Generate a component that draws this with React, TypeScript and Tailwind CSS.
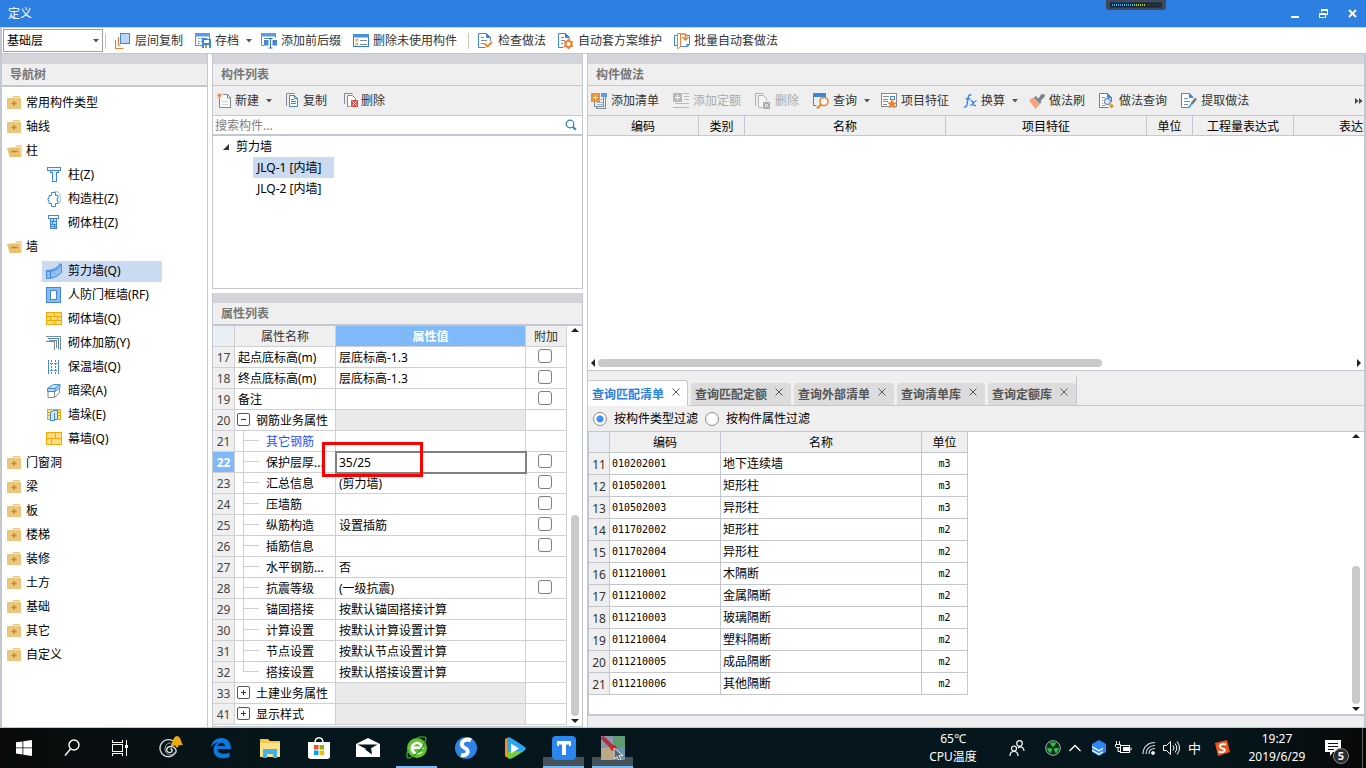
import { useState, type ReactNode } from 'react';
import { clsx } from 'clsx';

/* ---------- icons ---------- */

function Icon({ children, size = 16, crisp = true }: { children: ReactNode; size?: number; crisp?: boolean }) {
  return (
    <svg
      width={size}
      height={size}
      viewBox="0 0 16 16"
      fill="none"
      className="shrink-0"
      shapeRendering={crisp ? 'crispEdges' : 'auto'}
      aria-hidden="true"
    >
      {children}
    </svg>
  );
}

const BLUE = '#3f87d9';
const ORANGE = '#f08030';
const GREY = '#7e8a96';

const icons = {
  layerCopy: (
    <Icon crisp={false}>
      <path d="M.5 7v8.500h8M3.500 4v8.500h2" stroke={ORANGE} strokeWidth="1.200" />
      <rect x="5.500" y=".5" width="9" height="10" fill="#b7d7fb" stroke={BLUE} />
    </Icon>
  ),
  archive: (
    <Icon crisp={false}>
      <rect x=".5" y=".5" width="14" height="12" fill="#fff" stroke={GREY} />
      <rect x="0" y="0" width="15" height="3.500" fill="#5a9ae6" />
      <path d="M3 5.500h1.500M6 5.500h6M3 8.500h1.500M6 8.500h1M3 10.500h1.500" stroke={BLUE} />
      <rect x="7" y="6" width="9" height="9" fill={BLUE} />
      <rect x="9" y="7" width="5" height="3" fill="#fff" />
      <rect x="9" y="12" width="5" height="3" fill="#fff" />
      <rect x="10" y="12" width="2" height="3" fill={ORANGE} />
    </Icon>
  ),
  affix: (
    <Icon crisp={false}>
      <path d="M.5 3v9.500H3M14.500 3v2" stroke={GREY} />
      <rect x="0" y="0" width="15" height="3.500" fill="#5a9ae6" />
      <path d="M3 5.500h6" stroke={GREY} />
      <rect x="3" y="7" width="4.500" height="5.500" fill={BLUE} />
      <rect x="11.500" y="7" width="4.500" height="5.500" fill={BLUE} />
      <path d="M7.500 5.500h4M7.500 15h4M9.500 6v9" stroke="#2f6fc0" />
    </Icon>
  ),
  deleteUnused: (
    <Icon crisp={false}>
      <rect x=".5" y="1.500" width="15" height="12" fill="#fff" stroke="#2f7fd0" />
      <rect x="0" y="1" width="16" height="3.500" fill="#4a90e2" />
      <path d="M2.500 6l2.500 2.500M5 6L2.500 8.500M2.500 10L5 12.500M5 10l-2.500 2.500" stroke={ORANGE} />
      <path d="M7 7.500h7M7 11.500h7" stroke={GREY} />
    </Icon>
  ),
  check: (
    <Icon crisp={false}>
      <path d="M12.500 8V4.500L8.500.5h-8v14h7" stroke={BLUE} fill="#fff" />
      <path d="M8.500.5v4h4z" fill={BLUE} stroke={BLUE} />
      <path d="M3 4.500h3M3 7.500h6M3 10.500h3" stroke={GREY} />
      <path d="M6.500 10.500l3 3L14 9" stroke={ORANGE} strokeWidth="1.800" />
    </Icon>
  ),
  scheme: (
    <Icon crisp={false}>
      <path d="M11.500 6V4.500L7.500.5h-7v14h5" stroke={BLUE} fill="#fff" />
      <path d="M7.500.5v4h4z" fill={BLUE} stroke={BLUE} />
      <path d="M3 4.500h3M3 7.500h4M3 10.500h2" stroke={GREY} />
      <circle cx="10.500" cy="11" r="3" stroke={ORANGE} strokeWidth="2" />
      <path d="M10.500 6v2M10.500 14v2M6.200 8.500l1.700 1M13.100 12.500l1.700 1M14.800 8.500l-1.700 1M7.900 12.500l-1.700 1" stroke={ORANGE} strokeWidth="2" />
    </Icon>
  ),
  batch: (
    <Icon crisp={false}>
      <path d="M3 2.500H.5v10H3M12 2.500h3.500v9l-2 2H6" stroke={BLUE} />
      <path d="M15.500 11l-3 3v-3z" fill={BLUE} />
      <path d="M3.500 15.500V.5h3v13l-2 2z" stroke={ORANGE} />
      <path d="M6.500 1h5v5.500m-3-2.500l3 3 3-3" stroke={ORANGE} strokeWidth="1.500" />
    </Icon>
  ),
  create: (
    <Icon crisp={false}>
      <path d="M2.500 5v9.500h11v-10l-3-3H6" stroke={GREY} fill="#fafafa" />
      <path d="M10.500 1.500v3.500h3" stroke={GREY} />
      <path d="M5 8.500h6M5 11.500h6" stroke="#cfd4da" />
      <path d="M.5.500l4 4M4.500.5l-4 4M2.500 0v5M0 2.500h5" stroke={ORANGE} strokeWidth=".8" />
    </Icon>
  ),
  copy: (
    <Icon crisp={false}>
      <path d="M1.500 13V.5h8" stroke={GREY} />
      <path d="M4.500 2.500h5l3 3v8h-8z" stroke={BLUE} fill="#fff" />
      <path d="M9.500 2.500v3h3M6 6.500h3M6 8.500h5M6 10.500h5" stroke={BLUE} />
    </Icon>
  ),
  remove: (
    <Icon crisp={false}>
      <path d="M1.500 11V.5h8" stroke={GREY} />
      <path d="M7 13.500H4.500v-11h5l3 3v2" stroke={GREY} fill="#fff" />
      <rect x="8" y="7" width="7" height="7" fill="#d9534f" />
      <path d="M9.500 8.500l4 4M13.500 8.500l-4 4" stroke="#fff" />
    </Icon>
  ),
  removeOff: (
    <Icon crisp={false}>
      <path d="M.5 13V.5h8" stroke="#b0b0b0" />
      <path d="M7 14.500H3.500v-12h5l3 3v2" stroke="#b0b0b0" fill="#f6f6f6" />
      <rect x="8" y="9" width="7" height="7" fill="#a8a8a8" />
      <path d="M9.500 10.500l4 4M13.500 10.500l-4 4" stroke="#fff" />
    </Icon>
  ),
  addList: (
    <Icon>
      <path d="M3.500 9v4.500h9V2M5.500 13v2.500h9V3.500" stroke={GREY} />
      <rect x="10" y="0" width="6" height="4" fill="#5a9ae6" />
      <path d="M9 6.500h3M6 9.500h6M6 11.500h6" stroke="#9fb4c8" />
      <rect x="0" y="0" width="9" height="9" fill="#ee9040" />
      <path d="M4.500 2v5M2 4.500h5" stroke="#fff" />
    </Icon>
  ),
  addQuota: (
    <Icon>
      <rect x="0" y="0" width="9" height="9" fill="#b8b8b8" />
      <path d="M4.500 2v5M2 4.500h5" stroke="#fff" />
      <path d="M10 .5h6M11 3.500h5M11 6.500h5M2 10.500h14M0 14.500h16" stroke="#b8b8b8" />
    </Icon>
  ),
  query: (
    <Icon crisp={false}>
      <path d="M.5 3v9.500h3M12.500 3v2" stroke={BLUE} />
      <rect x="0" y="0" width="13" height="4" fill={BLUE} />
      <circle cx="11" cy="8.500" r="4" stroke={ORANGE} strokeWidth="1.600" fill="#fff" />
      <path d="M8 11.500l-4 4" stroke={ORANGE} strokeWidth="2" />
    </Icon>
  ),
  feature: (
    <Icon crisp={false}>
      <rect x=".5" y=".5" width="15" height="13" stroke={GREY} fill="#fff" />
      <path d="M2 3.500h6M2 6.500h5M2 8.500h5M2 11.500h4" stroke={GREY} />
      <rect x="9.500" y="3.500" width="4" height="3" stroke={BLUE} />
      <path d="M11 6l1.500 3.300 3.500.3-2.700 2.400.9 3.600L11 13.800l-3.200 1.800.9-3.600L6 9.600l3.500-.3z" fill={ORANGE} />
    </Icon>
  ),
  fx: (
    <Icon crisp={false} size={14}>
      <path d="M9.500 1.500C8 .3 6.500 1 6 4L4.500 12c-.4 2.500-1.500 3.500-3.500 2.500M3 5.500h5.500" stroke={BLUE} strokeWidth="1.700" />
      <path d="M8.500 8c2-1 2.500 0 3 2.500s1 3.500 3.500 2.500M15.500 7.500c-2-.5-5.500 6-7.500 5.500" stroke={BLUE} strokeWidth="1.500" />
    </Icon>
  ),
  brush: (
    <Icon crisp={false}>
      <path d="M0 7.500l4-3 7 6.500-4.500 5z" fill="#f9a27c" />
      <path d="M4.500 4.500L7 3l5.500 6-1.500 2z" fill={GREY} />
      <path d="M9 6.500l3-5L15.500 1l.3 2.500-4.300 4.500z" fill="#75828e" />
    </Icon>
  ),
  methodQuery: (
    <Icon crisp={false}>
      <path d="M12.500 9V4.500L8.500.5h-8v14h9" stroke={BLUE} fill="#fff" />
      <path d="M8.500.5v4h4z" fill={BLUE} stroke={BLUE} />
      <path d="M3 4.500h3M3 7.500h1M3 10.500h1M3 12.500h3" stroke={GREY} />
      <circle cx="8.500" cy="8.500" r="3" stroke="#7b93c4" fill="#dce9fb" strokeWidth="1.300" />
      <path d="M12.500 10.500L15 13l-2.500 2.500L10 13z" fill="#f0941e" />
    </Icon>
  ),
  extract: (
    <Icon crisp={false}>
      <path d="M11.500 5V4.500L8.500.5h-8v14h7" stroke={BLUE} fill="#fff" />
      <path d="M8.500.5v4h3.500z" fill={BLUE} stroke={BLUE} />
      <path d="M3 5.500h4M3 8.500h6M3 11.500h4" stroke={GREY} />
      <path d="M15 5.500L10.500 11" stroke="#6c7780" strokeWidth="2.500" />
      <path d="M10.500 11l-3 4" stroke="#35b5d8" strokeWidth="2" />
    </Icon>
  ),
  folder: (
    <Icon crisp={false}>
      <path d="M6.500 1H13v2h1v11H0V3h5z" fill="#ecc67c" />
      <path d="M6 2.500h7.500" stroke="#f9ebcd" />
      <path d="M7 6v5M4.500 8.500h5" stroke="#c48a28" strokeWidth="1.500" />
    </Icon>
  ),
  folderOpen: (
    <Icon crisp={false}>
      <path d="M2.500 4h6V2H15v11H3z" fill="#f3d9a2" />
      <path d="M0 5h13l1 9H2.500z" fill="#ebc170" />
      <path d="M4.500 8.500h6" stroke="#b98227" strokeWidth="1.500" />
    </Icon>
  ),
  column: (
    <Icon>
      <path d="M1.500.5h13v3h-13zM4.500 3.500v2h2v9h4v-9h2v-2" stroke={BLUE} fill="#e8f2fd" />
    </Icon>
  ),
  tieColumn: (
    <Icon crisp={false}>
      <path d="M8 .5h3.500l2 2v2h1v6h-1v2.500" stroke="#a9cbf2" />
      <path d="M5.500 1.500h4v3h2.500v3h-1v2h1v3H9.500v3h-4v-3H3v-3H2v-2h1v-3h2.500z" stroke={BLUE} fill="#fff" />
    </Icon>
  ),
  brickColumn: (
    <Icon>
      <rect x="2.500" y=".5" width="10" height="3" stroke={BLUE} fill="#fff" />
      <rect x="4.500" y="3.500" width="6" height="10" stroke={BLUE} fill="#b7d7fb" />
      <path d="M4 6.500h7M4 9.500h7M4 11.500h7M7.500 4v3M6.500 7v3M8.500 10v3" stroke={BLUE} />
    </Icon>
  ),
  shearWall: (
    <Icon crisp={false}>
      <path d="M.5 7.500C7 7.500 11 5 14 .8l1.700.5v8C12 13 8 15.500.5 15.500z" fill="#8dbff5" stroke={BLUE} />
      <path d="M.5 7.500l2.500 1C8 8.500 12 6 15.700 1.300M4.500 8.500v6.500" stroke={BLUE} />
    </Icon>
  ),
  frameWall: (
    <Icon>
      <rect x=".5" y=".5" width="14" height="15" fill="#8db9ee" stroke={BLUE} />
      <rect x="4.500" y="3.500" width="6" height="9" fill="#fff" stroke={BLUE} />
    </Icon>
  ),
  brickWall: (
    <Icon>
      <rect x=".5" y="1.500" width="15" height="12" fill="#ffdc8a" stroke="#f7a800" />
      <path d="M0 5.500h16M0 9.500h16M8.500 2v4M4.500 6v4M11.500 6v4M8.500 10v4" stroke="#f7a800" />
    </Icon>
  ),
  wallRebar: (
    <Icon>
      <path d="M0 1.500h14.500V15" stroke={GREY} />
      <path d="M2 3.500h10.500V14" stroke={BLUE} />
      <path d="M0 6.500h8.500V15M3 5.500h7.500V13" stroke={GREY} />
    </Icon>
  ),
  insulation: (
    <Icon>
      <path d="M2.500 1v14M12.500 1v14" stroke={BLUE} />
      <path d="M5.500 1v14M9.500 1v14" stroke={BLUE} strokeDasharray="2 1" />
      <path d="M2 4.500h11M2 11.500h11" stroke={BLUE} strokeDasharray="1 1" />
    </Icon>
  ),
  hiddenBeam: (
    <Icon crisp={false}>
      <path d="M1.500 5.500l6-4h6.500l-5 4z" fill="#cfe3fb" stroke={BLUE} />
      <path d="M1.500 8.500V5.500H9V8.500zM9 5.500L14 1.500v3L9 8.500" stroke={BLUE} fill="#b7d7fb" />
      <path d="M2 8.500v6h6.500l5-4.500V5M8.500 8.500v6" stroke={GREY} />
    </Icon>
  ),
  buttress: (
    <Icon>
      <rect x="1.500" y="2.500" width="13" height="10" fill="#ffdc8a" stroke="#f7a800" />
      <path d="M1 5.500h14M1 8.500h14" stroke="#f7a800" />
      <path d="M4.500 5.500l3-2h4v8l-3 2h-4z" fill="#d4e8fd" stroke={BLUE} />
      <path d="M8.500 5.500v8" stroke={BLUE} />
    </Icon>
  ),
  curtain: (
    <Icon>
      <rect x=".5" y="1.500" width="15" height="12" fill="#ffdc8a" stroke="#f7a800" />
      <path d="M0 7.500h16M9.500 2v5M5.500 8v6" stroke="#f7a800" />
    </Icon>
  ),
};

function Caret() {
  return (
    <svg width="6" height="4" viewBox="0 0 6 4" className="-mr-[3px] ml-[7px] shrink-0" aria-hidden="true">
      <path d="M0 0h6L3 3.500z" fill="#555" />
    </svg>
  );
}

type ToolButtonProps = {
  icon: ReactNode;
  label: string;
  menu?: boolean;
  disabled?: boolean;
  className?: string;
};

function ToolButton({ icon, label, menu, disabled, className = 'gap-1 px-[7px]' }: ToolButtonProps) {
  return (
    <button
      type="button"
      disabled={disabled}
      className={clsx('flex h-6 shrink-0 items-center whitespace-nowrap', className, disabled ? 'text-[#aaaaaa]' : 'text-[#333333]')}
    >
      {icon}
      <span className="flex items-center">
        {label}
        {menu && <Caret />}
      </span>
    </button>
  );
}

function PanelTitle({ children, thick }: { children: ReactNode; thick?: boolean }) {
  return (
    <div className="shrink-0">
      <div className="h-[10px] bg-[#d3d5db]" />
      <h2
        className={clsx(
          'flex items-center border-[#c3c7cf] bg-[#efefef] pl-2 font-bold text-[#777777]',
          thick ? 'h-[23px] border-b-2' : 'h-[22px] border-b',
        )}
      >
        {children}
      </h2>
    </div>
  );
}

/* ---------- navigation tree ---------- */

type NavItem = { label: string; icon: ReactNode; child?: boolean; active?: boolean };

const navItems: NavItem[] = [
  { label: '常用构件类型', icon: icons.folder },
  { label: '轴线', icon: icons.folder },
  { label: '柱', icon: icons.folderOpen },
  { label: '柱(Z)', icon: icons.column, child: true },
  { label: '构造柱(Z)', icon: icons.tieColumn, child: true },
  { label: '砌体柱(Z)', icon: icons.brickColumn, child: true },
  { label: '墙', icon: icons.folderOpen },
  { label: '剪力墙(Q)', icon: icons.shearWall, child: true, active: true },
  { label: '人防门框墙(RF)', icon: icons.frameWall, child: true },
  { label: '砌体墙(Q)', icon: icons.brickWall, child: true },
  { label: '砌体加筋(Y)', icon: icons.wallRebar, child: true },
  { label: '保温墙(Q)', icon: icons.insulation, child: true },
  { label: '暗梁(A)', icon: icons.hiddenBeam, child: true },
  { label: '墙垛(E)', icon: icons.buttress, child: true },
  { label: '幕墙(Q)', icon: icons.curtain, child: true },
  { label: '门窗洞', icon: icons.folder },
  { label: '梁', icon: icons.folder },
  { label: '板', icon: icons.folder },
  { label: '楼梯', icon: icons.folder },
  { label: '装修', icon: icons.folder },
  { label: '土方', icon: icons.folder },
  { label: '基础', icon: icons.folder },
  { label: '其它', icon: icons.folder },
  { label: '自定义', icon: icons.folder },
];

function NavTree() {
  return (
    <nav className="flex w-[208px] shrink-0 flex-col border-r border-l-2 border-[#c3c7cf]">
      <PanelTitle thick>导航树</PanelTitle>
      <ul className="pt-1">
        {navItems.map((item) => (
          <li key={item.label} className="flex h-6 items-center">
            <button
              type="button"
              className={clsx(
                'flex h-[21px] items-center whitespace-nowrap',
                item.child ? 'ml-10 w-[120px] gap-[6px] pl-1' : 'gap-[3px] pl-[5px]',
                item.active && 'bg-[#c9daf1]',
              )}
            >
              {item.icon}
              {item.label}
            </button>
          </li>
        ))}
      </ul>
    </nav>
  );
}

/* ---------- scroll bars ---------- */

function Triangle({ dir }: { dir: 'up' | 'down' | 'left' | 'right' }) {
  const shapes = { up: 'M1 6h8L5 2z', down: 'M1 3h8L5 7z', left: 'M7 1v8L3 5z', right: 'M3 1v8l4-4z' };
  return (
    <svg width="10" height="10" viewBox="0 0 10 10" className="shrink-0" aria-hidden="true">
      <path d={shapes[dir]} fill="#222" />
    </svg>
  );
}

/* ---------- property table ---------- */

type Prop = {
  no: number;
  name: string;
  value?: string;
  kind?: 'group' | 'child' | 'last';
  open?: boolean;
  check?: boolean;
  link?: boolean;
  current?: boolean;
};

const props: Prop[] = [
  { no: 17, name: '起点底标高(m)', value: '层底标高-1.3', check: true },
  { no: 18, name: '终点底标高(m)', value: '层底标高-1.3', check: true },
  { no: 19, name: '备注', check: true },
  { no: 20, name: '钢筋业务属性', kind: 'group', open: true },
  { no: 21, name: '其它钢筋', kind: 'child', link: true },
  { no: 22, name: '保护层厚...', value: '35/25', kind: 'child', check: true, current: true },
  { no: 23, name: '汇总信息', value: '(剪力墙)', kind: 'child', check: true },
  { no: 24, name: '压墙筋', kind: 'child', check: true },
  { no: 25, name: '纵筋构造', value: '设置插筋', kind: 'child', check: true },
  { no: 26, name: '插筋信息', kind: 'child', check: true },
  { no: 27, name: '水平钢筋...', value: '否', kind: 'child' },
  { no: 28, name: '抗震等级', value: '(一级抗震)', kind: 'child', check: true },
  { no: 29, name: '锚固搭接', value: '按默认锚固搭接计算', kind: 'child' },
  { no: 30, name: '计算设置', value: '按默认计算设置计算', kind: 'child' },
  { no: 31, name: '节点设置', value: '按默认节点设置计算', kind: 'child' },
  { no: 32, name: '搭接设置', value: '按默认搭接设置计算', kind: 'last' },
  { no: 33, name: '土建业务属性', kind: 'group' },
  { no: 41, name: '显示样式', kind: 'group' },
];

function PropName({ row }: { row: Prop }) {
  if (row.kind === 'group') {
    return (
      <div className="flex h-5 items-center gap-[6px] pl-[2px]">
        <button
          type="button"
          aria-label={row.name}
          className="mb-px flex size-[13px] items-center justify-center rounded-[2px] border border-[#555555]"
        >
          <svg width="5" height="5" viewBox="0 0 5 5" shapeRendering="crispEdges" aria-hidden="true">
            <path d={row.open ? 'M0 2.500h5' : 'M0 2.500h5M2.500 0v5'} stroke="#333" />
          </svg>
        </button>
        <span className="pt-[2px]">{row.name}</span>
      </div>
    );
  }
  if (row.kind) {
    return (
      <div className="flex h-5 items-center gap-[7px] pl-2 whitespace-nowrap">
        <span className="flex h-5 w-4 shrink-0 flex-col">
          <span className="h-[10px] border-b border-l border-[#d0d0d0]" />
          <span className={clsx('grow border-[#d0d0d0]', row.kind === 'child' && 'border-l')} />
        </span>
        <span className={clsx('pt-[2px]', row.link && 'text-[#1a56ff]')}>{row.name}</span>
      </div>
    );
  }
  return <div className="pt-[2px] pl-[3px] whitespace-nowrap">{row.name}</div>;
}

const propCell = 'h-[21px] border-r border-b border-[#d0d0d0] p-0';
const propText = 'h-[21px] border-r border-b border-[#d0d0d0] px-0 pt-[2px] pb-0';

function PropertyTable() {
  return (
    <div className="flex min-h-0 grow">
      <table className="table-fixed border-separate border-spacing-0 self-start">
        <colgroup>
          <col className="w-[22px]" />
          <col className="w-[101px]" />
          <col className="w-[190px]" />
          <col className="w-[41px]" />
        </colgroup>
        <thead>
          <tr className="text-[#333333]">
            <th aria-label="序号" className={clsx(propCell, 'bg-[#eaeff6]')} />
            <th className={clsx(propText, 'bg-[#efefef] font-normal')}>属性名称</th>
            <th className={clsx(propText, 'bg-[#80b9fa] font-bold text-white')}>属性值</th>
            <th className={clsx(propText, 'bg-[#efefef] font-normal')}>附加</th>
          </tr>
        </thead>
        <tbody>
          {props.map((row) => (
            <tr key={row.no}>
              <td className={clsx(propText, 'text-center', row.current ? 'bg-[#80b9fa] font-bold text-white' : 'bg-[#efefef] text-[#444444]')}>
                {row.no}
              </td>
              <td className={propCell}>
                <PropName row={row} />
              </td>
              <td
                className={clsx(
                  propText,
                  'pl-[3px]',
                  row.kind === 'group' && 'bg-[#eaeaea]',
                  row.current && 'relative outline-2 -outline-offset-1 outline-[#808080]',
                )}
              >
                {row.value}
                {row.current && <span className="absolute -top-[10px] -left-[14px] h-[35px] w-[101px] border-3 border-[#ff0000]" />}
              </td>
              <td className={propCell}>
                {row.check && (
                  <input
                    type="checkbox"
                    aria-label={`${row.name} 附加`}
                    className="mr-auto mb-[2px] ml-3 block size-[14px] appearance-none rounded-[3px] border border-[#808080] bg-white"
                  />
                )}
              </td>
            </tr>
          ))}
        </tbody>
      </table>
      <div className="flex grow flex-col items-center bg-white">
        <Triangle dir="up" />
        <div className="flex-[179]" />
        <div className="w-2 flex-[202] rounded-full bg-[#c9c9c9]" />
        <Triangle dir="down" />
      </div>
    </div>
  );
}

function ComponentColumn() {
  return (
    <section className="ml-1 flex w-[371px] shrink-0 flex-col">
      <div className="border-x border-b border-[#c3c7cf]">
        <PanelTitle>构件列表</PanelTitle>
        <div className="flex h-[30px] items-center border-b border-[#c3c7cf] bg-[#efefef]">
          <ToolButton icon={icons.create} label="新建" menu className="gap-[2px] pr-2 pl-1" />
          <ToolButton icon={icons.copy} label="复制" className="gap-[2px] px-2" />
          <ToolButton icon={icons.remove} label="删除" className="gap-[2px] px-2" />
        </div>
        <div className="flex h-5 items-center border-b-2 border-[#c3c7cf]">
          <input
            type="text"
            aria-label="搜索构件"
            placeholder="搜索构件..."
            className="h-[18px] min-w-0 grow pl-[2px] outline-none placeholder:text-[#808080]"
          />
          <button type="button" aria-label="搜索" className="mr-[5px]">
            <svg width="12" height="12" viewBox="0 0 12 12" fill="none" stroke="#2486c4" aria-hidden="true">
              <circle cx="5" cy="5" r="3.800" strokeWidth="1.200" />
              <path d="M7.800 7.800l3 3" strokeWidth="2" />
            </svg>
          </button>
        </div>
        <ul className="h-[152px]">
          <li className="flex h-[21px] items-center gap-[6px] pl-[9px]">
            <svg width="8" height="8" viewBox="0 0 8 8" aria-hidden="true">
              <path d="M7 1v6H1z" fill="#333" />
            </svg>
            剪力墙
          </li>
          <li className="ml-10 flex h-[21px] w-[81px] items-center bg-[#c9daf1] pl-1">JLQ-1 [内墙]</li>
          <li className="ml-10 flex h-[21px] w-[81px] items-center pl-1">JLQ-2 [内墙]</li>
        </ul>
      </div>
      <div className="mt-1 flex min-h-0 grow flex-col border-x border-b border-[#c3c7cf]">
        <PanelTitle thick>属性列表</PanelTitle>
        <PropertyTable />
      </div>
    </section>
  );
}

/* ---------- quantity methods ---------- */

const methodColumns = ['编码', '类别', '名称', '项目特征', '单位', '工程量表达式', '表达式说明'];

const tabs = ['查询匹配清单', '查询匹配定额', '查询外部清单', '查询清单库', '查询定额库'];

const listRows = [
  [11, '010202001', '地下连续墙', 'm3'],
  [12, '010502001', '矩形柱', 'm3'],
  [13, '010502003', '异形柱', 'm3'],
  [14, '011702002', '矩形柱', 'm2'],
  [15, '011702004', '异形柱', 'm2'],
  [16, '011210001', '木隔断', 'm2'],
  [17, '011210002', '金属隔断', 'm2'],
  [18, '011210003', '玻璃隔断', 'm2'],
  [19, '011210004', '塑料隔断', 'm2'],
  [20, '011210005', '成品隔断', 'm2'],
  [21, '011210006', '其他隔断', 'm2'],
];

const listCell = 'h-[22px] border-r border-b border-[#c3c7cf] py-0 pr-0';
const listHead = 'h-[21px] border-r border-b border-[#c3c7cf] bg-[#efefef] px-0 pt-[2px] pb-0 font-normal';

function TabBar({ active, onSelect }: { active: number; onSelect: (i: number) => void }) {
  return (
    <div className="mt-[5px] flex h-[30px] shrink-0 border-b border-[#c3c7cf]">
      <div role="tablist" className="flex items-end gap-[3px] border-r border-[#c3c7cf]">
        {tabs.map((tab, i) => (
          <div
            key={tab}
            className={clsx(
              'flex items-center gap-2 rounded-t-[3px] pl-1 font-bold',
              i === active
                ? '-mb-px h-[26px] border-t border-r border-[#c3c7cf] bg-white pr-[7px] text-[#2a80e0]'
                : 'h-[22px] bg-[#dcdcdc] pr-2 text-[#555555]',
            )}
          >
            <button type="button" role="tab" aria-selected={i === active} onClick={() => onSelect(i)} className="pt-[2px] whitespace-nowrap">
              {tab}
            </button>
            <button type="button" aria-label={`关闭${tab}`} className="mb-1">
              <svg width="8" height="8" viewBox="0 0 8 8" aria-hidden="true">
                <path d="M.5.5l7 7M7.500.5l-7 7" stroke="#555" />
              </svg>
            </button>
          </div>
        ))}
      </div>
    </div>
  );
}

function FilterRadio({ label, checked, onChange }: { label: string; checked: boolean; onChange: () => void }) {
  return (
    <label className="flex items-center gap-[7px]">
      <input
        type="radio"
        name="filter"
        checked={checked}
        onChange={onChange}
        className="size-[14px] appearance-none rounded-full border border-[#8a8a8a] bg-white checked:bg-[radial-gradient(circle,#3f92f2_3px,#ffffff_4px)]"
      />
      {label}
    </label>
  );
}

function MethodColumn() {
  const [tab, setTab] = useState(0);
  const [filter, setFilter] = useState(0);

  return (
    <section className="ml-1 flex min-w-0 grow flex-col border-r-2 border-l border-[#c3c7cf] bg-[#efefef]">
      <PanelTitle>构件做法</PanelTitle>
      <div className="flex h-[30px] shrink-0 items-center overflow-hidden border-b border-[#c3c7cf]">
        <div className="-ml-1 flex min-w-0 grow overflow-hidden">
          <ToolButton icon={icons.addList} label="添加清单" />
          <ToolButton icon={icons.addQuota} label="添加定额" disabled />
          <ToolButton icon={icons.removeOff} label="删除" disabled />
          <ToolButton icon={icons.query} label="查询" menu />
          <ToolButton icon={icons.feature} label="项目特征" />
          <ToolButton icon={icons.fx} label="换算" menu />
          <ToolButton icon={icons.brush} label="做法刷" />
          <ToolButton icon={icons.methodQuery} label="做法查询" />
          <ToolButton icon={icons.extract} label="提取做法" />
        </div>
        <button type="button" aria-label="更多" className="mr-px">
          <svg width="8" height="6" viewBox="0 0 8 6" aria-hidden="true">
            <path d="M0 0l3.500 3L0 6zM4 0l3.500 3L4 6z" fill="#444" />
          </svg>
        </button>
      </div>

      <div className="shrink-0 border-b border-[#c3c7cf] bg-white">
        <div className="h-[241px] overflow-hidden">
          <table className="w-[857px] table-fixed border-separate border-spacing-0">
            <colgroup>
              <col className="w-[111px]" />
              <col className="w-[46px]" />
              <col className="w-[201px]" />
              <col className="w-[201px]" />
              <col className="w-[46px]" />
              <col className="w-[101px]" />
              <col className="w-[151px]" />
            </colgroup>
            <thead>
              <tr>
                {methodColumns.map((name) => (
                  <th key={name} className="h-5 border-r border-b border-[#c3c7cf] bg-[#efefef] px-0 pt-[2px] pb-0 font-normal">
                    {name}
                  </th>
                ))}
              </tr>
            </thead>
          </table>
        </div>
        <div className="mb-px flex h-3 items-center">
          <Triangle dir="left" />
          <div className="h-2 flex-[505] rounded-full bg-[#c9c9c9]" />
          <div className="flex-[252]" />
          <Triangle dir="right" />
        </div>
      </div>

      <TabBar active={tab} onSelect={setTab} />
      <div className="flex h-[26px] shrink-0 items-center gap-[7px] border-b border-[#c3c7cf] pl-[5px]">
        <FilterRadio label="按构件类型过滤" checked={filter === 0} onChange={() => setFilter(0)} />
        <FilterRadio label="按构件属性过滤" checked={filter === 1} onChange={() => setFilter(1)} />
      </div>

      <div className="flex min-h-0 grow border-b-2 border-l border-[#c3c7cf] bg-white">
        <table className="w-[379px] table-fixed border-separate border-spacing-0 self-start">
          <colgroup>
            <col className="w-[21px]" />
            <col className="w-[111px]" />
            <col className="w-[201px]" />
            <col className="w-[46px]" />
          </colgroup>
          <thead>
            <tr>
              <th aria-label="序号" className="border-r border-b border-[#c3c7cf] bg-[#eaeff6] p-0" />
              <th className={listHead}>编码</th>
              <th className={listHead}>名称</th>
              <th className={listHead}>单位</th>
            </tr>
          </thead>
          <tbody>
            {listRows.map(([no, code, name, unit]) => (
              <tr key={no}>
                <td className="h-[22px] border-r border-b border-[#c3c7cf] bg-[#efefef] px-0 pt-[2px] pb-0 text-center text-[#333333]">{no}</td>
                <td className={clsx(listCell, "pl-[2px] font-['DejaVu_Sans_Mono',monospace] text-[10px]")}>{code}</td>
                <td className={clsx(listCell, 'pl-[2px]')}>{name}</td>
                <td className={clsx(listCell, "pl-0 text-center font-['DejaVu_Sans_Mono',monospace] text-[10px]")}>{unit}</td>
              </tr>
            ))}
          </tbody>
        </table>
        <div className="mr-[3px] ml-auto flex w-[10px] flex-col items-center">
          <Triangle dir="up" />
          <div className="flex-[124]" />
          <div className="w-2 flex-[138] rounded-full bg-[#c9c9c9]" />
          <Triangle dir="down" />
        </div>
      </div>
      <div className="h-[11px] shrink-0" />
    </section>
  );
}

/* ---------- window chrome ---------- */

function TitleBar() {
  return (
    <header className="relative flex h-7 shrink-0 items-center border-b border-[#c3d3e8] bg-[#2d7fe2] pl-2 text-white">
      <h1 className="grow">定义</h1>
      <svg width="60" height="10" viewBox="0 0 60 10" className="absolute top-0 right-[200px]" aria-hidden="true">
        <path d="M0 0h60v8l-2 2H2L0 8z" fill="#3c4a60" />
        <rect x="4" y="2.500" width="52" height="5" rx="1" fill="#1b2431" />
        <path d="M6 5h22" stroke="#2fa8e8" strokeWidth="2" strokeDasharray="1 1" />
        <path d="M28 5h12" stroke="#b5cf4a" strokeWidth="2" strokeDasharray="1 1" />
        <path d="M40 5h15" stroke="#3a3f48" strokeWidth="2" strokeDasharray="1 1" />
      </svg>
      <div className="flex items-center gap-5 pr-[9px]">
        <button type="button" aria-label="最小化">
          <svg width="8" height="10" viewBox="0 0 8 10" aria-hidden="true">
            <path d="M0 8h8" stroke="#fff" strokeWidth="2" />
          </svg>
        </button>
        <button type="button" aria-label="还原">
          <svg width="9" height="10" viewBox="0 0 9 10" fill="none" stroke="#fff" shapeRendering="crispEdges" aria-hidden="true">
            <path d="M2.500 3V.5h6v5H7M2 1.500h7M.5 4.500h6v4h-6zM0 5.500h7" />
          </svg>
        </button>
        <button type="button" aria-label="关闭">
          <svg width="9" height="9" viewBox="0 0 9 9" aria-hidden="true">
            <path d="M1 1l7 7M8 1L1 8" stroke="#fff" strokeWidth="1.800" />
          </svg>
        </button>
      </div>
    </header>
  );
}

const mainTool = 'gap-1 px-[6px]';

function MainToolbar() {
  return (
    <div className="flex h-[26px] shrink-0 items-center border-b border-l-2 border-[#c3c7cf] bg-white">
      <div className="relative ml-px">
        <select aria-label="楼层" className="h-[23px] w-[100px] appearance-none border border-[#a0a0a0] bg-white pl-[3px] text-black">
          <option>基础层</option>
        </select>
        <svg width="6" height="4" viewBox="0 0 6 4" className="pointer-events-none absolute top-[10px] right-1" aria-hidden="true">
          <path d="M0 0h6L3 3.500z" fill="#555" />
        </svg>
      </div>
      <div className="mr-[3px] ml-[2px] h-4 w-px bg-[#c8c8c8]" />
      <ToolButton icon={icons.layerCopy} label="层间复制" className={mainTool} />
      <ToolButton icon={icons.archive} label="存档" menu className={mainTool} />
      <ToolButton icon={icons.affix} label="添加前后缀" className={mainTool} />
      <ToolButton icon={icons.deleteUnused} label="删除未使用构件" className={mainTool} />
      <div className="mr-[3px] ml-[5px] h-4 w-px bg-[#c8c8c8]" />
      <ToolButton icon={icons.check} label="检查做法" className={mainTool} />
      <ToolButton icon={icons.scheme} label="自动套方案维护" className={mainTool} />
      <ToolButton icon={icons.batch} label="批量自动套做法" className={mainTool} />
    </div>
  );
}

/* ---------- taskbar ---------- */

function TaskButton({ label, children, open, raised }: { label: string; children: ReactNode; open?: boolean; raised?: boolean }) {
  return (
    <button type="button" aria-label={label} className="relative flex h-10 w-[49px] shrink-0 items-center justify-center">
      {raised && <span className="absolute inset-x-1 bottom-0 h-[11px] bg-[#46525a]" />}
      <svg width="24" height="24" viewBox="0 0 24 24" fill="none" className="relative" aria-hidden="true">
        {children}
      </svg>
      {open && <span className="absolute inset-x-1 bottom-0 h-[2px] bg-[#76b9f5]" />}
    </button>
  );
}

function Taskbar() {
  return (
    <footer className="flex h-10 shrink-0 items-center bg-[linear-gradient(90deg,#0a0a0a,#05171c_20%,#05171c_90%,#080808)] text-white">
      <button type="button" aria-label="开始" className="flex h-10 w-12 items-center justify-center">
        <svg width="16" height="16" viewBox="0 0 16 16" fill="#fff" aria-hidden="true">
          <path d="M0 2.300l6.500-.9v6.100H0zM7.300 1.300L16 0v7.500H7.300zM0 8.300h6.500v6.200L0 13.600zM7.300 8.300H16V16l-8.700-1.300z" />
        </svg>
      </button>
      <button type="button" aria-label="搜索" className="flex h-10 w-12 items-center justify-center">
        <svg width="16" height="18" viewBox="0 0 16 18" fill="none" stroke="#fff" strokeWidth="1.400" aria-hidden="true">
          <circle cx="10" cy="6" r="5" />
          <path d="M6.500 10L1 16.500" />
        </svg>
      </button>
      <button type="button" aria-label="任务视图" className="flex h-10 w-12 items-center justify-center">
        <svg width="18" height="16" viewBox="0 0 18 16" fill="none" stroke="#fff" shapeRendering="crispEdges" aria-hidden="true">
          <path d="M1.500 0v2.500h10V0M1.500 16v-2.500h10V16M1.500 4.500h10v7h-10zM15.500 0v16" />
          <rect x="14" y="5" width="3" height="3" fill="#fff" stroke="none" />
        </svg>
      </button>
      <button type="button" aria-label="通知助手" className="flex h-10 w-[52px] items-center justify-center">
        <svg width="28" height="28" viewBox="0 0 28 28" fill="none" aria-hidden="true">
          <path d="M17 7a8.500 8.500 0 1 0 3 11c.5-3.500-2-5.500-5.500-5.500-4 0-5.500 5-1.500 6 3 .5 4.500-2.500 1.500-4" stroke="#d8dcde" strokeWidth="1.400" />
          <path d="M15 9c-6-1-8 8-3.500 11 2.500 1.500 5.500.5 7-2" stroke="#9aa2a5" />
          <path d="M15 10c2-1 1.500-7 6-8 4.500 1 4 7 6 9l-12 1z" fill="#e9ab10" />
          <circle cx="21" cy="12" r="1.500" fill="#e9ab10" />
        </svg>
      </button>
      <TaskButton label="Edge">
        <path d="M2 11C3 5 7 2 12.500 2 19 2 22 7 22 13H8.500c.5 5 7 6 12 3.500V21c-7 3-16 1-16-7 0-4 2-6.500 5-7.500-3 0-5.500 1.500-7.500 4.500zM8.500 10H16c0-4.500-6.500-4.500-7.500 0z" fill="#0a7ae0" />
      </TaskButton>
      <TaskButton label="文件资源管理器">
        <path d="M2 3h8l2 2h10v16H2z" fill="#f5c84c" />
        <path d="M2 7h20v14H2z" fill="#fde08a" />
        <path d="M5 13h14v9h-4v-4H9v4H5z" fill="#3fb2e8" />
      </TaskButton>
      <TaskButton label="应用商店">
        <path d="M8 7c0-7 8-7 8 0" stroke="#fff" strokeWidth="1.500" />
        <path d="M1 6h22v15.500L21 23H3l-2-1.500z" fill="#fff" />
        <path d="M7 9h4.500v4.500H7z" fill="#f25022" />
        <path d="M12.500 9H17v4.500h-4.500z" fill="#7fba00" />
        <path d="M7 14.500h4.500V19H7z" fill="#00a4ef" />
        <path d="M12.500 14.500H17V19h-4.500z" fill="#ffb900" />
      </TaskButton>
      <TaskButton label="邮件">
        <path d="M0 8l12-6 12 6v13H0z" fill="#fff" />
        <path d="M1.500 8.500h20L12 14z" fill="#05171c" />
        <path d="M9 13.500l7 5-1-7z" fill="#05171c" />
      </TaskButton>
      <TaskButton label="浏览器" open>
        <circle cx="12" cy="12" r="10" fill="#5fc22f" />
        <path d="M18.500 13H9c.5 4.500 5.500 4.500 9 2.500-2 4-12 5-12.500-3C5.500 4 18.500 3 18.500 13zM9 10.500h6c-.5-3.500-5.500-3.500-6 0z" fill="#fff" />
        <path d="M3 22C8 22 20 12 21 2c-2-2-6-1-9 0M3 22c-2-1-1-5 0-8" stroke="#2f9d18" strokeWidth="1.500" />
      </TaskButton>
      <TaskButton label="搜狗浏览器">
        <circle cx="12" cy="12" r="11" fill="#2f84e8" />
        <path d="M17 4.500C11 1 4 8 10 11.500c7 3 3 9-3 7.500" stroke="#fff" strokeWidth="4" />
      </TaskButton>
      <TaskButton label="视频播放器">
        <path d="M2 4c0-2 2-2 4-1v18c-2 1-4 0-4-2z" fill="#ff8a1e" />
        <path d="M4 2c2-2 4 0 18 9 1 1 1 2 0 3C10 22 7 24 5 22z" fill="#2aa5f0" />
        <path d="M4.500 16l16-1C10 22 7 24 5 22z" fill="#71cf3b" />
        <path d="M8 7.500l8 5-8 5z" fill="#fff" />
      </TaskButton>
      <TaskButton label="土建计量" open raised>
        <rect x="0" y="0" width="24" height="24" rx="4" fill="#2b87ee" />
        <path d="M5 5h14v5h-2V8.500h-3V19h-4V8.500H7V10H5z" fill="#fff" />
      </TaskButton>
      <TaskButton label="画图" open raised>
        <path d="M0 0h12v12H0z" fill="#8c96a8" />
        <path d="M12 0h12v12H12z" fill="#5d9d70" />
        <path d="M0 12h12v12H0z" fill="#b8a987" />
        <path d="M12 12h12v12H12z" fill="#6f93ad" />
        <path d="M1 1l11 11" stroke="#b0303c" strokeWidth="4" />
        <circle cx="12.500" cy="12" r="3" fill="#d81e28" />
        <path d="M13 12v11l3-2.500 2 4 2-1-2-4h4z" fill="#59666c" stroke="#e8e8e8" />
      </TaskButton>

      <div className="ml-auto flex items-center">
        <div className="w-[56px] text-center leading-[18px]">
          <div>65℃</div>
          <div>CPU温度</div>
        </div>
        <button type="button" aria-label="人脉" className="ml-7">
          <svg width="16" height="16" viewBox="0 0 16 16" fill="none" stroke="#fff" strokeWidth="1.200" aria-hidden="true">
            <circle cx="10.500" cy="3.500" r="2.800" />
            <circle cx="5" cy="8.500" r="2.500" />
            <path d="M1 16c0-6 8-6 8 0M9 8c3-2.500 6-.5 6 3" />
          </svg>
        </button>
        <svg width="16" height="16" viewBox="0 0 16 16" className="ml-5" aria-hidden="true">
          <circle cx="8" cy="8" r="7.300" fill="#14301c" stroke="#a8b4ac" />
          <path d="M8 8L4.500 2.500h7zM8 8l6.300.3-3.300 5.500zM8 8l-6.300.3L5 13.800z" fill="#27c346" />
          <circle cx="8" cy="8" r="1.500" fill="#14301c" />
        </svg>
        <button type="button" aria-label="显示隐藏的图标" className="ml-2">
          <svg width="12" height="8" viewBox="0 0 12 8" fill="none" stroke="#fff" strokeWidth="1.300" aria-hidden="true">
            <path d="M.5 7L6 1.500 11.500 7" />
          </svg>
        </button>
        <svg width="14" height="16" viewBox="0 0 14 16" className="ml-[11px]" aria-hidden="true">
          <path d="M7 0l7 4v8l-7 4-7-4V4z" fill="#2b87f5" />
          <path d="M0 6l7 4 4-2.300v1.500L7 11.500 0 7.500zM0 9.500l7 4 4-2.300v1.200L7 15l-7-4z" fill="#fff" />
        </svg>
        <svg width="17" height="14" viewBox="0 0 17 14" fill="none" stroke="#fff" className="ml-[9px]" aria-hidden="true">
          <rect x="5.500" y="4.500" width="9" height="7" />
          <path d="M8 6h6v4H8z" fill="#fff" stroke="none" />
          <path d="M16 6.500v3M1.500 0v3M4.500 0v3M.5 3.500h5v2l-1 1h-3l-1-1zM3 7v3.500h2" />
        </svg>
        <svg width="14" height="14" viewBox="0 0 14 14" fill="none" stroke="#d8dcde" className="ml-[10px]" aria-hidden="true">
          <path d="M1 13C1 6 6 1.500 13 1.500M4 13c0-5 3.500-8.500 9-8.500M7 13c0-3.500 2.500-5.500 6-5.500" strokeWidth="1.200" />
          <circle cx="11" cy="12" r="1.500" fill="#fff" />
        </svg>
        <svg width="17" height="14" viewBox="0 0 17 14" fill="none" stroke="#fff" className="ml-[7px]" aria-hidden="true">
          <path d="M.5 4.500h3l4-4v13l-4-4h-3zM10 4.500q2 2.500 0 5M12 2.500q3.500 4.500 0 9M14 .5q5 6.500 0 13" />
        </svg>
        <span className="ml-2 w-[14px] text-[13px]">中</span>
        <svg width="16" height="16" viewBox="0 0 16 16" className="ml-3" aria-hidden="true">
          <path d="M1 3L13 0l3 12-12 4z" fill="#f0541e" />
          <path d="M12 4.500C8 3 4 5.500 6.500 7.500S12 9 10.500 11 6 12 4.500 11.500" fill="none" stroke="#fff" strokeWidth="2" />
        </svg>
        <div className="ml-4 w-[62px] text-center leading-[18px]">
          <div>19:27</div>
          <div>2019/6/29</div>
        </div>
        <button type="button" aria-label="通知" className="relative ml-[17px] size-6">
          <svg width="16" height="16" viewBox="0 0 16 16" className="absolute top-1 left-0" aria-hidden="true">
            <path d="M0 0h16v12H8l-3 4v-4H0z" fill="#fff" />
            <path d="M3 3.500h10M3 6.500h10M3 9.500h6" stroke="#111" />
          </svg>
          <span className="absolute right-0 bottom-[-4px] flex size-4 items-center justify-center rounded-full border border-[#8a8a8a] bg-[#2b2b2b] text-[11px] font-bold">
            5
          </span>
        </button>
        <span className="mr-[3px] ml-[13px] h-10 w-px bg-[#5a5f62]" />
      </div>
    </footer>
  );
}

export default function App() {
  return (
    <div className="flex h-screen flex-col overflow-hidden bg-white font-['Noto_Sans','Noto_Sans_CJK_SC',sans-serif] text-[12px] leading-4 text-black">
      <TitleBar />
      <MainToolbar />
      <main className="flex min-h-0 grow border-b border-[#c3c7cf]">
        <NavTree />
        <ComponentColumn />
        <MethodColumn />
      </main>
      <Taskbar />
    </div>
  );
}
